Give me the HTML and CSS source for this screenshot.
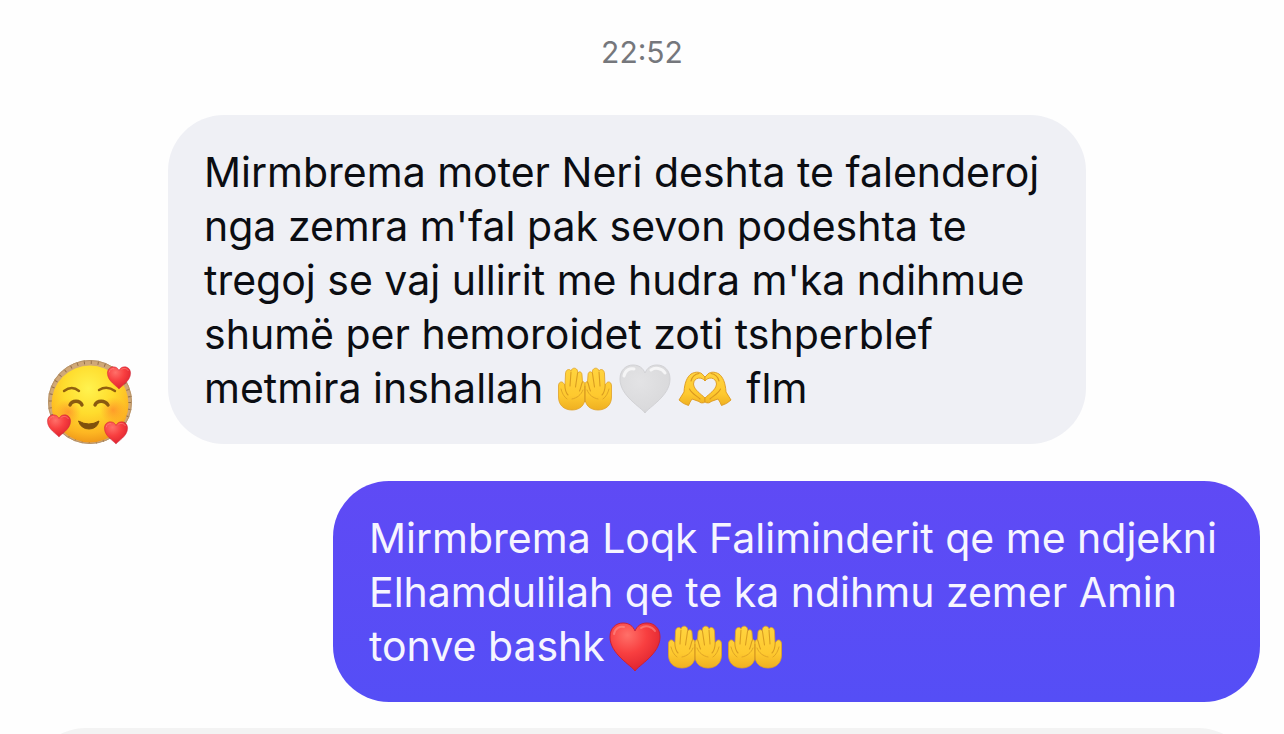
FILE: index.html
```html
<!DOCTYPE html>
<html lang="sq">

<head>
    <meta charset="UTF-8">
    <meta name="viewport" content="width=device-width, initial-scale=1.0">
    <title>Chat</title>
    <link rel="stylesheet" href="styles.css">
</head>

<body>
    <!-- shared emoji shapes -->
    <svg class="sprite" aria-hidden="true">
        <defs>
            <linearGradient id="skin" x1="0" y1="0" x2="0" y2="1">
                <stop offset="0" stop-color="#ffd43f" />
                <stop offset="0.65" stop-color="#fec92f" />
                <stop offset="1" stop-color="#efb021" />
            </linearGradient>
            <radialGradient id="red" cx="0.35" cy="0.25" r="0.85">
                <stop offset="0" stop-color="#ff7069" />
                <stop offset="0.45" stop-color="#f83f40" />
                <stop offset="1" stop-color="#d91d2c" />
            </radialGradient>
            <radialGradient id="white" cx="0.4" cy="0.35" r="0.75">
                <stop offset="0" stop-color="#e3e3e5" />
                <stop offset="0.75" stop-color="#dadadc" />
                <stop offset="1" stop-color="#cfcfd1" />
            </radialGradient>
            <radialGradient id="face" cx="0.48" cy="0.3" r="0.72">
                <stop offset="0" stop-color="#fff34f" />
                <stop offset="0.45" stop-color="#ffdc2d" />
                <stop offset="0.8" stop-color="#fdb622" />
                <stop offset="1" stop-color="#ee9418" />
            </radialGradient>
            <radialGradient id="blush">
                <stop offset="0" stop-color="#ff7a2a" stop-opacity="0.6" />
                <stop offset="1" stop-color="#ff8a2a" stop-opacity="0" />
            </radialGradient>
            <path id="heart" d="M30 52C26 46 5 35 5 18C5 9 11 4 18 4C24 4 28 7 30 12C32 7 36 4 42 4C49 4 55 9 55 18C55 35 34 46 30 52Z" />
            <g id="palm">
                <path d="M3.500 25C3.500 20 8 20 9 23L10 24L10.500 13C10.500 8 15 7.500 16 10C17 6 22 6.500 22.500 10L22.800 12C24 10 27 10.500 27 14L27.500 21C29 20 30 22 30 24L30 37C30 44 25 49 17 49C9 49 3.500 44 3.500 36Z" fill="url(#skin)" stroke="#e0a126" stroke-width="0.8" />
                <path d="M16 11L15 25M22.600 12L20.500 26M27.400 21C26 24 26 27 24.500 30M9.800 24C10 29 11 32 13 34" fill="none" stroke="#d99c22" stroke-width="1.100" stroke-linecap="round" />
                <path d="M6 28C7 32 9 36 12 38M28 29C26 34 22 37 17 38" fill="none" stroke="#e0a526" stroke-width="1" stroke-linecap="round" />
                <path d="M30 25L30 41" stroke="#d99c22" stroke-width="0.8" />
            </g>
            <g id="curl">
                <path d="M4 39L9 31C9.500 22 12 16 16 13C21 10 26 11 28 14L30 16L30 20C27 15.500 19 16 18.500 23C19 29 26 33 30 37L30 41C28 42.500 25 42 24 40.500L17 38C15.500 40 14.500 42 13.500 44.500Q8 43 4 39Z" fill="url(#skin)" stroke="#dd981d" stroke-width="0.9" stroke-linejoin="round" />
                <path d="M24 12.500C20 13 17 16 16 20M14.500 28C17 33 22 35 25 38" fill="none" stroke="#d9971f" stroke-width="1.100" stroke-linecap="round" />
            </g>
            <symbol id="hands" viewBox="0 0 60 54">
                <use href="#palm" />
                <use href="#palm" transform="matrix(-1 0 0 1 60 0)" />
            </symbol>
            <symbol id="heart-hands" viewBox="0 0 60 54">
                <use href="#curl" />
                <use href="#curl" transform="matrix(-1 0 0 1 60 0)" />
            </symbol>
            <symbol id="red-heart" viewBox="0 0 60 54">
                <use href="#heart" fill="url(#red)" stroke="#c92137" />
                <path d="M9 15C10 9 15 7 19 8M36 9C40 6 47 7 50 12" fill="none" stroke="#ffa09a" stroke-width="2" stroke-linecap="round" opacity="0.5" />
            </symbol>
            <symbol id="white-heart" viewBox="0 0 60 54">
                <use href="#heart" fill="url(#white)" stroke="#d2d2d5" />
                <path d="M9 15C10 9 15 7 19 8M36 9C40 6 47 7 50 12" fill="none" stroke="#f5f5f6" stroke-width="3" stroke-linecap="round" />
            </symbol>
        </defs>
    </svg>

    <main class="thread">
        <time class="timestamp">22:52</time>

        <div class="message received">
            <svg class="avatar" viewBox="0 0 88 86" role="img" aria-label="Avatar">
                <circle cx="44" cy="42" r="42" fill="#d0a877" />
                <circle cx="44" cy="42" r="40" fill="none" stroke="#94704a" stroke-width="4" stroke-dasharray="1 6" />
                <circle cx="44" cy="42" r="41.500" fill="none" stroke="#b8946a" stroke-width="1" />
                <circle cx="44" cy="44" r="38.500" fill="url(#face)" />
                <circle cx="22" cy="52" r="13" fill="url(#blush)" />
                <circle cx="67" cy="50" r="13" fill="url(#blush)" />
                <path d="M18 31Q26 25 33 31M53 30Q61 25 69 31" fill="none" stroke="#91610f" stroke-width="2.400" stroke-linecap="round" />
                <path d="M24 45C26 40 34 40 36 45M49 45C51 40 59 40 62 45" fill="none" stroke="#8a5a10" stroke-width="3.400" stroke-linecap="round" />
                <path d="M32.500 61Q43 67 53 61Q51 69 43 69Q35 69 32.500 61Z" fill="#7f500c" stroke="#7f500c" stroke-linejoin="round" />
                <use href="#red-heart" x="59" y="5" width="28" height="25" />
                <use href="#red-heart" x="-1" y="53" width="28" height="25" />
                <use href="#red-heart" x="56" y="60" width="28" height="25" />
            </svg>
            <p class="bubble">
                Mirmbrema moter Neri deshta te falenderoj nga zemra m'fal pak sevon podeshta te tregoj se vaj ullirit me hudra m'ka ndihmue shumë per hemoroidet zoti tshperblef metmira inshallah
                <svg class="emoji" role="img" aria-label="Duar të hapura"><use href="#hands" /></svg><svg class="emoji" role="img" aria-label="Zemër e bardhë"><use href="#white-heart" /></svg><svg class="emoji" role="img" aria-label="Duar në formë zemre"><use href="#heart-hands" /></svg>
                flm
            </p>
        </div>

        <div class="message sent">
            <p class="bubble">
                Mirmbrema Loqk Faliminderit qe me ndjekni Elhamdulilah qe te ka ndihmu zemer Amin tonve bashk<svg class="emoji" role="img" aria-label="Zemër e kuqe"><use href="#red-heart" /></svg><svg class="emoji" role="img" aria-label="Duar të hapura"><use href="#hands" /></svg><svg class="emoji" role="img" aria-label="Duar të hapura"><use href="#hands" /></svg>
            </p>
        </div>

        <div class="composer"></div>
    </main>
</body>

</html>
```
FILE: styles.css
```css
* {
    box-sizing: border-box;
}

body {
    margin: 0;
    height: 100vh;
    overflow: hidden;
    background-color: #fefefe;
    font-family: Inter, "Liberation Sans", sans-serif;
}

.sprite {
    position: absolute;
    width: 0;
    height: 0;
}

.thread {
    display: flex;
    flex-direction: column;
    padding: 34px 24px 0;
}

.timestamp {
    align-self: center;
    margin-bottom: 45px;
    font-size: 30px;
    line-height: 36px;
    color: #75777c;
}

.message {
    display: flex;
    align-items: flex-end;
    margin-bottom: 37px;
}

.received {
    gap: 34px;
    padding: 0 174px 0 22px;
}

.sent {
    justify-content: flex-end;
    margin-bottom: 26px;
    padding-left: 309px;
}

.avatar {
    flex: none;
    width: 88px;
    height: 86px;
    margin-bottom: -2px;
}

.bubble {
    margin: 0;
    padding: 30px 36px 29px;
    border-radius: 56px;
    font-size: 41px;
    line-height: 54px;
}

.received .bubble {
    background-color: #eff0f5;
    color: #0b0d12;
}

.sent .bubble {
    background: linear-gradient(#5f4af5, #554ef6);
    color: #f6f5ff;
}

.emoji {
    width: 60px;
    height: 54px;
    vertical-align: top;
}

/* only the top edge of the input shows */
.composer {
    height: 112px;
    margin: 0 6px;
    border-radius: 56px;
    background-color: #f3f3f3;
}
```
